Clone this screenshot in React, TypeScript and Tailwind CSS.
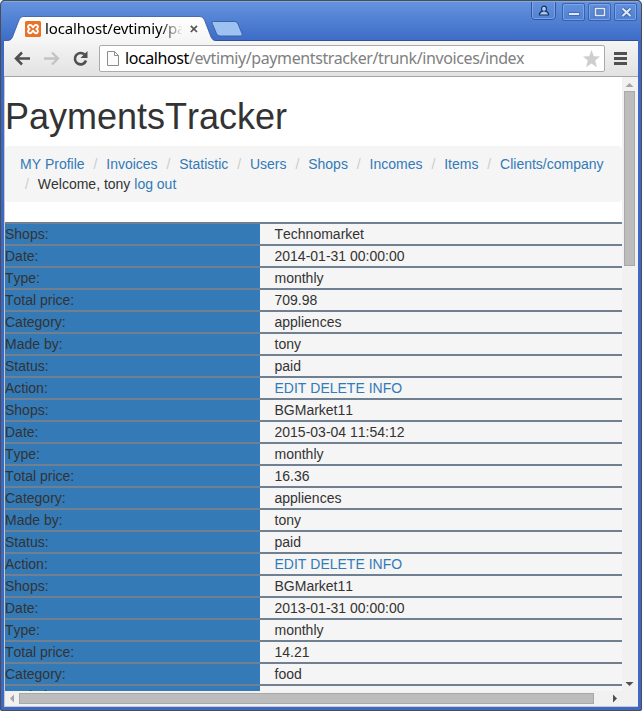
type Invoice = { shop: string; date: string; type: string; total: string; category: string; madeBy: string; status: string };

const invoices: Invoice[] = [
  { shop: 'Technomarket', date: '2014-01-31 00:00:00', type: 'monthly', total: '709.98', category: 'appliences', madeBy: 'tony', status: 'paid' },
  { shop: 'BGMarket11', date: '2015-03-04 11:54:12', type: 'monthly', total: '16.36', category: 'appliences', madeBy: 'tony', status: 'paid' },
  { shop: 'BGMarket11', date: '2013-01-31 00:00:00', type: 'monthly', total: '14.21', category: 'food', madeBy: 'tony', status: 'paid' },
];

const links = ['MY Profile', 'Invoices', 'Statistic', 'Users', 'Shops', 'Incomes', 'Items', 'Clients/company'];

function Row({ label, children }: { label: string; children: React.ReactNode }) {
  return (
    <div className="flex h-[22px] shrink-0 border-t-2 border-[#708090] bg-[#f5f5f5] leading-5">
      <div className="w-[255px] shrink-0 bg-[#337ab7]">{label}</div>
      <div className="pl-[14.5px]">{children}</div>
    </div>
  );
}

function InvoiceRows({ invoice, partial }: { invoice: Invoice; partial: boolean }) {
  return (
    <>
      <Row label="Shops:">{invoice.shop}</Row>
      <Row label="Date:">{invoice.date}</Row>
      <Row label="Type:">{invoice.type}</Row>
      <Row label="Total price:">{invoice.total}</Row>
      <Row label="Category:">{invoice.category}</Row>
      <Row label="Made by:">{invoice.madeBy}</Row>
      {!partial && (
        <>
          <Row label="Status:">{invoice.status}</Row>
          <Row label="Action:">
            <span className="text-[#337ab7]">EDIT DELETE INFO</span>
          </Row>
        </>
      )}
    </>
  );
}

function TabStrip() {
  return (
    <div className="relative h-[41px] shrink-0 bg-linear-to-b from-[#6595df] to-[#3d6bc7]">
      <svg className="absolute top-0 left-0" width="642" height="41" viewBox="0 0 642 41">
        <defs>
          <linearGradient id="tabFill" x1="0" y1="0" x2="0" y2="1">
            <stop offset="0" stopColor="#ffffff" />
            <stop offset="1" stopColor="#f5f5f5" />
          </linearGradient>
        </defs>
        <path d="M0 1.5H642" stroke="#82a9e6" />
        <path d="M0 .5H642" stroke="#4d4d4d" />
        <path d="M4 40.5H638" stroke="#2f5299" />
        <path d="M4 42V41.500Q4.500 40.500 6 40.500H8Q11 40.500 12.500 37L19 20Q20.500 16.500 23 16.500H200Q203 16.500 204.500 20L211 37Q212.500 40.500 216 41V42Z" fill="url(#tabFill)" stroke="#31569e" strokeWidth=".8" />
        <path d="M213.500 21.500H235Q237 21.500 238 24L242 33.500Q243 36 240.500 36H220Q217.500 36 216.500 33.500L212 23Q211.500 21.500 213.500 21.500Z" fill="#9dc2f2" stroke="#365c9f" strokeWidth=".9" />
        <path d="M190.800 25.800L197 32M197 25.800L190.800 32" stroke="#555" strokeWidth="1.700" />
        <rect x="25" y="21" width="16" height="16" rx="1.500" fill="#ea7125" />
        <path d="M33 27.300L31.500 25.500Q30 24.300 28.600 25.400Q27.400 26.800 28.500 28L29.600 29L28.500 30Q27.400 31.300 28.600 32.700Q30 33.700 31.500 32.500L33 30.700L34.500 32.500Q36 33.700 37.400 32.700Q38.600 31.300 37.500 30L36.400 29L37.500 28Q38.600 26.800 37.400 25.400Q36 24.300 34.500 25.500Z" fill="none" stroke="#fff" strokeWidth="1.900" strokeLinejoin="round" />
        <g fill="none" stroke="#31569f">
          <path d="M531.500 2V16Q531.500 19.500 535 19.500H552Q555.500 19.500 555.500 16V2" />
          <rect x="562.500" y="3.500" width="22" height="17" rx="1.500" strokeOpacity=".75" />
          <rect x="588.500" y="3.500" width="22" height="17" rx="1.500" strokeOpacity=".75" />
          <rect x="614.500" y="3.500" width="22" height="17" rx="1.500" strokeOpacity=".75" />
        </g>
        <g fill="none" stroke="#8baee8" strokeOpacity=".7">
          <path d="M532.500 2V16Q532.500 18.500 535 18.500H552Q554.500 18.500 554.500 16V2" />
          <rect x="563.500" y="4.500" width="20" height="15" rx="1" />
          <rect x="589.500" y="4.500" width="20" height="15" rx="1" />
          <rect x="615.500" y="4.500" width="20" height="15" rx="1" />
        </g>
        <path d="M541.500 8.700A2.500 2.500 0 0 1 546.500 8.700Q546.500 10.600 545.300 11.100Q548.500 11.800 548.500 14.500V15H539.500V14.500Q539.500 11.800 542.700 11.100Q541.500 10.600 541.500 8.700Z" fill="#a9c8f4" stroke="#193461" strokeWidth="1.200" />
        <g fill="none">
          <path d="M568.500 14H579.500" stroke="#3b63ae" strokeWidth="3.600" />
          <path d="M569 14H579" stroke="#e1eafa" strokeWidth="2" />
          <rect x="595.500" y="8.500" width="9" height="7" stroke="#3b63ae" strokeWidth="3.200" />
          <rect x="595.500" y="8.500" width="9" height="7" stroke="#e1eafa" strokeWidth="1.600" />
          <path d="M622.500 8.500L630.500 16M630.500 8.500L622.500 16" stroke="#3b63ae" strokeWidth="3.800" />
          <path d="M622.500 8.500L630.500 16M630.500 8.500L622.500 16" stroke="#e1eafa" strokeWidth="2" />
        </g>
      </svg>
      <div className="absolute top-[18px] left-[45px] w-[137px] overflow-hidden bg-linear-to-r from-black from-84% to-black/5 bg-clip-text font-['Noto_Sans',sans-serif] text-[15px] leading-[21px] tracking-[-0.12px] whitespace-nowrap text-transparent">
        localhost/evtimiy/pa
      </div>
    </div>
  );
}

function Toolbar() {
  return (
    <div className="mx-[4px] flex h-9 shrink-0 items-start border-b border-[#a7a7a7] bg-linear-to-b from-[#f5f5f5] to-[#e2e2e2] pt-[4px]">
      <svg className="shrink-0" width="95" height="28" viewBox="4 45 95 28" fill="none">
        <path d="M16 58.500H30M22 52.500L16 58.500L22 64.500" stroke="#505050" strokeWidth="2.500" />
        <path d="M44 58.500H58M52 52.500L58 58.500L52 64.500" stroke="#c3c3c3" strokeWidth="2.300" />
        <path d="M84.500 54.500A5.700 5.700 0 1 0 86 60.500" stroke="#505050" strokeWidth="2.600" />
        <path d="M87.500 51V58H80.500Z" fill="#505050" />
      </svg>
      <div className="flex h-[27px] w-[506px] shrink-0 items-center rounded-[2px] border border-[#ababab] bg-white pl-[6px]">
        <svg className="shrink-0" width="14" height="18" viewBox="0 0 14 18" fill="#fcfcfc" stroke="#8d8d8d">
          <path d="M1.500 1.500H8.500L12.500 5.500V15.500H1.500Z" />
          <path d="M8.500 1.500V5.500H12.500" fill="none" />
        </svg>
        <div className="mb-[2px] ml-[5px] w-[457px] font-['Noto_Sans',sans-serif] text-[16px] leading-6 tracking-[-0.4px] whitespace-nowrap text-[#808080]">
          <span className="text-black">localhost</span>/evtimiy/paymentstracker/trunk/invoices/index
        </div>
        <svg className="shrink-0" width="18" height="18" viewBox="0 0 18 18" fill="#cecece">
          <path d="M9.500 0L11.800 6.200L18 6.500L13.200 10.600L14.900 17.200L9.500 13.400L4.100 17.200L5.800 10.600L1 6.500L7.200 6.200Z" />
        </svg>
      </div>
      <svg className="ml-[9px] shrink-0" width="14" height="27" viewBox="0 0 14 27">
        <path d="M0 8.500H13M0 13.500H13M0 18.500H13" stroke="#505050" strokeWidth="2.800" />
      </svg>
    </div>
  );
}

function Page() {
  return (
    <div className="flex w-[617px] shrink-0 flex-col overflow-hidden bg-white text-[14px] text-[#333] [font-kerning:none]">
      <h1 className="mt-5 h-[39px] shrink-0 text-[36px] leading-[39.6px]">PaymentsTracker</h1>
      <ol className="mt-[10px] mb-5 h-14 shrink-0 rounded-[4px] bg-[#f5f5f5] px-[15px] py-2 leading-5">
        {links.map((link, i) => (
          <span key={link}>
            <li className="inline-block">
              {i > 0 && <span className="px-[5px] text-[#ccc]">/&nbsp;</span>}
              <a className="text-[#337ab7]">{link}</a>
            </li>{' '}
          </span>
        ))}
        <li className="inline-block">
          <span className="px-[5px] text-[#ccc]">/&nbsp;</span>
          Welcome, tony <a className="text-[#337ab7]">log out</a>
        </li>
      </ol>
      {invoices.map((invoice, i) => (
        <InvoiceRows key={invoice.date} invoice={invoice} partial={i === invoices.length - 1} />
      ))}
    </div>
  );
}

export default function App() {
  return (
    <div className="bg-[#f5f5f5]">
      <div className="relative flex h-[711px] w-[642px] flex-col overflow-hidden rounded-t-[5px] rounded-b-[2px] bg-[#3b69c5] font-['Liberation_Sans',Arial,sans-serif]">
        <TabStrip />
        <Toolbar />
        <div className="mx-[4px] flex h-[614px] shrink-0 border-l border-[#c9c9c9] bg-[#f1f1f1]">
          <Page />
          <svg className="shrink-0" width="16" height="614" viewBox="0 0 16 614">
            <path d="M3.500 10H11.500L7.500 6Z" fill="#a3a3a3" />
            <rect x="2.500" y="14.500" width="10" height="174" fill="#bcbcbc" stroke="#a8a8a8" />
            <path d="M3.500 605H11.500L7.500 609Z" fill="#505050" />
          </svg>
        </div>
        <div className="mx-[4px] flex h-4 shrink-0 border-b border-l border-[#c9c9c9] bg-[#f1f1f1]">
          <svg width="633" height="15" viewBox="0 0 633 15">
            <path d="M9 3.500V11.500L5 7.500Z" fill="#a3a3a3" />
            <rect x="14.500" y="2.500" width="574" height="10" fill="#bcbcbc" stroke="#a8a8a8" />
            <path d="M608 3.500V11.500L612 7.500Z" fill="#505050" />
          </svg>
        </div>
        <div className="pointer-events-none absolute inset-0 rounded-t-[5px] rounded-b-[2px] border border-[#4d4d4d]" />
      </div>
    </div>
  );
}
